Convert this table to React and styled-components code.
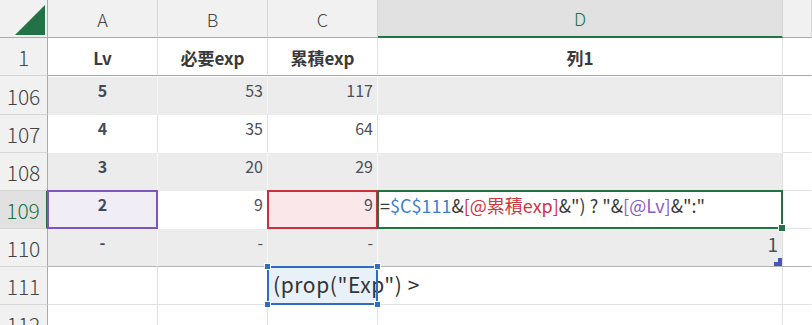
import styled, { createGlobalStyle, css } from "styled-components"

const GlobalStyle = createGlobalStyle`
  html, body {
    margin: 0;
    padding: 0;
    background: #ffffff;
    overflow: hidden;
  }
`

const GREEN = '#217346'
const GRID = '#e1e1e1'
const BAND = '#ececec'
const HEAD_BG = '#f1f1f1'
const HEAD_LINE = '#ababab'

const Sheet = styled.div`
  display: grid;
  grid-template-columns: 48px 110px 110px 110px 405px 1fr;
  grid-template-rows: 38px 38px 1px repeat(7, 38px);
  width: 812px;
  height: 325px;
  overflow: hidden;
  font-family: "Noto Sans CJK JP", "Noto Sans", sans-serif;
  color: #4b4f58;
`

const Corner = styled.div`
  background: ${HEAD_BG};
  border-right: 1px solid ${HEAD_LINE};
  border-bottom: 1px solid ${HEAD_LINE};
  display: flex;
  justify-content: flex-end;
  align-items: flex-end;
  padding: 0 2px 2px 0;
`

const ColHead = styled.div`
  background: ${HEAD_BG};
  border-right: 1px solid #d6d6d6;
  border-bottom: 1px solid ${HEAD_LINE};
  display: flex;
  justify-content: center;
  align-items: center;
  font-size: 18px;
  font-weight: 300;
  color: #444;
  ${p => p.$active && css`
    background: #e1e1e1;
    color: ${GREEN};
    border-bottom: 2px solid ${GREEN};
  `}
`

const RowHead = styled.div`
  background: ${HEAD_BG};
  border-right: 1px solid ${HEAD_LINE};
  border-bottom: 1px solid #d6d6d6;
  display: flex;
  justify-content: center;
  align-items: center;
  font-size: 21px;
  font-weight: 300;
  color: #444;
  ${p => p.$active && css`
    background: #e1e1e1;
    color: ${GREEN};
    border-right: 2px solid ${GREEN};
  `}
`

const Cell = styled.div`
  position: relative;
  box-sizing: border-box;
  background: ${p => p.$bg || '#ffffff'};
  border-right: 1px solid ${p => p.$vline || GRID};
  border-bottom: 1px solid ${p => p.$hline || 'transparent'};
  display: flex;
  justify-content: ${p => p.$align === 'right' ? 'flex-end' : p.$align === 'left' ? 'flex-start' : 'center'};
  align-items: flex-start;
  padding: 3px 4px 0;
  font-size: ${p => p.$size || 16}px;
  font-weight: ${p => p.$bold ? 700 : 400};
  line-height: 1.3;
  white-space: nowrap;
  color: ${p => p.$bold ? '#44495a' : '#4b4f58'};
  ${p => p.$pad && css`padding-left: ${p.$pad}px;`}

  ${p => p.$sel && css`
    &::after {
      content: '';
      position: absolute;
      top: -1px;
      left: -1px;
      right: -1px;
      bottom: -1px;
      border: 2px solid ${p.$sel};
      pointer-events: none;
    }
  `}
`

const TableHead = styled(Cell)`
  color: #3a3a3a;
  font-weight: 700;
  font-size: 17px;
  align-items: center;
  padding-top: 4px;
  border-bottom: 1px solid #a6a6a6;
`

const Sep = styled.div`
  background: ${p => p.$head ? HEAD_BG : '#ffffff'};
  border-right: ${p => p.$head ? `1px solid ${HEAD_LINE}` : 'none'};
  grid-column: ${p => p.$head ? 'auto' : '2 / -1'};
`

const FillHandle = styled.span`
  position: absolute;
  right: -4px;
  bottom: -4px;
  width: 6px;
  height: 6px;
  background: ${GREEN};
  border: 1px solid #ffffff;
  z-index: 2;
`

const ResizeMark = styled.svg`
  position: absolute;
  right: 0;
  bottom: 0;
`

const Tok = styled.span`
  color: ${p => ({ ref: '#3c7fd6', col: '#d1343c', lv: '#8a5cc8' }[p.$kind] || '#3a3a3a')};
`

const EditBox = styled.div`
  position: absolute;
  top: -1px;
  left: -1px;
  right: -1px;
  bottom: -1px;
  border: 2px solid #2f6cc4;
  pointer-events: none;
  z-index: 3;
`

const Grip = styled.span`
  position: absolute;
  width: 5px;
  height: 5px;
  background: #2f6cc4;
  border: 1px solid #ffffff;
  ${p => p.$top ? 'top: -5px;' : 'bottom: -5px;'}
  ${p => p.$left ? 'left: -5px;' : 'right: -5px;'}
`

const EditText = styled.span`
  position: relative;
  z-index: 2;
  font-size: 21px;
  letter-spacing: 0.6px;
  color: #333;
  font-weight: 400;
  margin-top: 1px;
`

const Triangle = () => (
  <svg width="30" height="30" viewBox="0 0 30 30">
    <polygon points="0,30 30,30 30,0" fill={GREEN} />
  </svg>
)

const rows = [
  { n: 106, band: true, lv: '5', need: '53', total: '117', d: '' },
  { n: 107, band: false, lv: '4', need: '35', total: '64', d: '' },
  { n: 108, band: true, lv: '3', need: '20', total: '29', d: '' },
  { n: 109, band: false, lv: '2', need: '9', total: '9', d: 'formula' },
  { n: 110, band: true, lv: '-', need: '-', total: '-', d: '1' },
]

// 列1 の数式: 参照ごとに色分け
const Formula = () => (
  <>
    <Tok>=</Tok>
    <Tok $kind="ref">$C$111</Tok>
    <Tok>&amp;</Tok>
    <Tok $kind="col">[@累積exp]</Tok>
    <Tok>&amp;") ? "&amp;</Tok>
    <Tok $kind="lv">[@Lv]</Tok>
    <Tok>&amp;":"</Tok>
  </>
)

const DataRow = ({ row }) => {
  const bg = row.band ? BAND : '#ffffff'
  const vline = row.band ? '#f6f6f6' : GRID
  const last = row.n === 110
  const hline = last ? '#b3b3b3' : 'transparent'
  const active = row.n === 109
  return (
    <>
      <RowHead $active={active}>{row.n}</RowHead>
      <Cell $bg={active ? '#f0edf7' : bg} $vline={vline} $hline={hline} $bold $sel={active ? '#7e55c0' : null}>
        {row.lv}
      </Cell>
      <Cell $bg={bg} $vline={vline} $hline={hline} $align="right">{row.need}</Cell>
      <Cell $bg={active ? '#f9e7e9' : bg} $vline={vline} $hline={hline} $align="right" $sel={active ? '#c8323c' : null}>
        {row.total}
      </Cell>
      {row.d === 'formula' ? (
        <Cell $vline={GRID} $align="left" $size={18} $pad={2} $sel={GREEN}>
          <Formula />
          <FillHandle />
        </Cell>
      ) : (
        <Cell $bg={bg} $vline={GRID} $hline={hline} $align="right" $size={19}>
          {row.d}
          {last && (
            <ResizeMark width="8" height="8" viewBox="0 0 8 8">
              <polygon points="4,0 8,0 8,8 0,8 0,4 4,4" fill="#4757b0" />
            </ResizeMark>
          )}
        </Cell>
      )}
      <Cell $hline={last ? '#b3b3b3' : GRID} $vline="transparent" />
    </>
  )
}

const PlainRow = ({ n, children }) => (
  <>
    <RowHead>{n}</RowHead>
    <Cell $hline={GRID} />
    <Cell $hline={GRID} />
    {children || <Cell $hline={GRID} />}
    <Cell $hline={GRID} />
    <Cell $hline={GRID} $vline="transparent" />
  </>
)

export default function App() {
  return (
    <>
      <GlobalStyle />
      <Sheet>
        <Corner><Triangle /></Corner>
        <ColHead>A</ColHead>
        <ColHead>B</ColHead>
        <ColHead>C</ColHead>
        <ColHead $active>D</ColHead>
        <ColHead />

        <RowHead>1</RowHead>
        <TableHead>Lv</TableHead>
        <TableHead>必要exp</TableHead>
        <TableHead>累積exp</TableHead>
        <TableHead>列1</TableHead>
        <TableHead $vline="transparent" />

        <Sep $head />
        <Sep />

        {rows.map(r => <DataRow key={r.n} row={r} />)}

        <PlainRow n={111}>
          <Cell $hline={GRID} $bg="#e8f0fa" $align="left" $pad={5}>
            <EditText>(prop("Exp") &gt;</EditText>
            <EditBox>
              <Grip $top $left />
              <Grip $top />
              <Grip $left />
              <Grip />
            </EditBox>
          </Cell>
        </PlainRow>
        <PlainRow n={112} />
      </Sheet>
    </>
  )
}
